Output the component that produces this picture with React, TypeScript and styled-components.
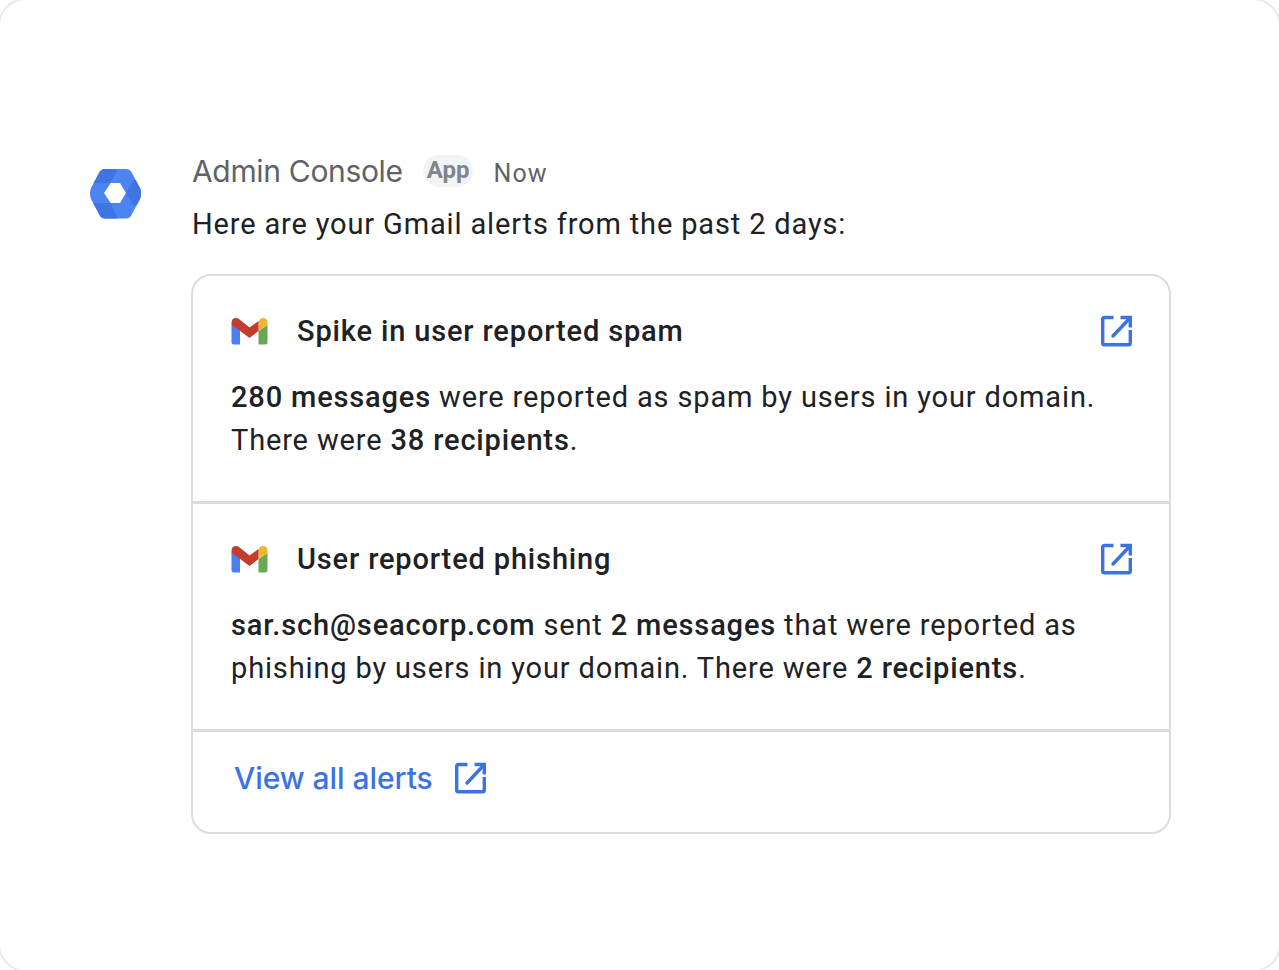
import React from 'react'
import styled, { createGlobalStyle } from 'styled-components'

const GlobalStyle = createGlobalStyle`
  html, body {
    margin: 0;
    padding: 0;
    background: #fff;
    overflow: hidden;
  }
  body {
    font-family: Roboto, "Liberation Sans", sans-serif;
    color: #202124;
  }
`

const Frame = styled.div`
  box-sizing: border-box;
  width: 1283px;
  height: 974px;
  margin: -2px;
  overflow: hidden;
  display: flex;
  gap: 50px;
  padding: 151px 108px 0 90px;
  border: 2px solid #e8e9ec;
  border-radius: 28px;
  background: #fff;
`

const Avatar = styled.div`
  flex: none;
  width: 52px;
  height: 52px;
  margin-top: 17px;
`

const Content = styled.div`
  flex: 1;
  min-width: 0;
`

const MetaRow = styled.div`
  display: flex;
  align-items: center;
  height: 40px;
`

const AppName = styled.span`
  font-family: Inter, Roboto, sans-serif;
  font-size: 30px;
  letter-spacing: -0.33px;
  color: #5f6368;
`

const AppTag = styled.span`
  margin-left: 20px;
  padding: 0 4px;
  height: 32px;
  line-height: 31px;
  border-radius: 16px;
  background: #f1f3f4;
  font-size: 24px;
  font-weight: 700;
  color: #80868b;
`

const Time = styled.span`
  margin-left: 20px;
  margin-top: 4px;
  font-size: 25px;
  letter-spacing: 1.1px;
  color: #5f6368;
`

const Intro = styled.p`
  margin: 12px 0 28px;
  font-size: 29px;
  line-height: 43px;
  letter-spacing: 0.85px;
`

const Card = styled.div`
  margin-left: -1px;
  border: 2px solid #dadce0;
  border-radius: 20px;
`

const Alert = styled.section`
  height: 225px;
  box-sizing: border-box;
  padding: 34px 36px 0 38px;
  & + & {
    height: 231px;
    padding-top: 34px;
    border-top: 3px solid #dadce0;
    border-bottom: 3px solid #dadce0;
  }
`

const AlertHead = styled.div`
  display: flex;
  align-items: center;
  height: 42px;
`

const Title = styled.h2`
  flex: 1;
  margin: 0 0 0 29px;
  font-size: 29px;
  font-weight: 500;
  letter-spacing: 0.85px;
`

const Body = styled.p`
  margin: 24px 0 0;
  font-size: 29px;
  line-height: 43px;
  letter-spacing: 0.85px;
  b {
    font-weight: 500;
  }
`

const Footer = styled.a`
  display: flex;
  align-items: center;
  gap: 22px;
  height: 100px;
  padding: 0 0 8px 41px;
  box-sizing: border-box;
  font-family: Inter, Roboto, sans-serif;
  font-size: 30px;
  font-weight: 500;
  letter-spacing: -0.05px;
  color: #3b73e2;
`

const GmailIcon = () => (
  <svg width="37" height="27" viewBox="0 0 36 27">
    <path d="M0 6 V24 Q0 26.500 2.500 26.500 H8.500 V12 Z" fill="#4a7fee" />
    <path d="M27 13 L36 7 V24 Q36 26.500 33.500 26.500 H27 Z" fill="#67a953" />
    <path d="M27 4 Q28 0 31.500 0 Q36 0 36 5 V7 L27 13 Z" fill="#edb62d" />
    <path d="M0 5 Q0 0 4.500 0 Q6 0 7.500 1 L18 9.500 L27 3 V13 L18 20 L0 6.500 Z" fill="#c43c2e" />
  </svg>
)

const OpenIcon = () => (
  <svg width="32" height="32" viewBox="0 0 32 32" fill="none" stroke="#3b73e2" strokeWidth="3.400">
    <path d="M12.500 2.500 H3.500 Q1.700 2.500 1.700 4.300 V28 Q1.700 29.800 3.500 29.800 H27.500 Q29.300 29.800 29.300 28 V15" />
    <path d="M19.500 2.500 H29.300 V12.500" />
    <path d="M29 3 L12 21" strokeLinecap="round" />
  </svg>
)

const AdminLogo = () => (
  <svg width="52" height="52" viewBox="0 0 52 52">
    <defs>
      <clipPath id="admin-logo-hex">
        <path d="M15 1 H36 Q40 1 42 5 L50 20 Q52 25.500 50 31 L42 46 Q40 50.500 36 50.500 H15 Q11 50.500 9 46 L1 31 Q-1 25.500 1 20 L9 5 Q11 1 15 1 Z" />
      </clipPath>
    </defs>
    <g clipPath="url(#admin-logo-hex)">
      <rect x="-1" width="53" height="52" fill="#4c84f4" />
      <path d="M-1 0 H28 L20.700 15 H-1 Z" fill="#3f74e3" />
      <path d="M44 12 L36 25 L43 37 H55 V12 Z" fill="#3f74e3" />
      <path d="M-1 35 H20.700 L28 52 H-1 Z" fill="#3f74e3" />
    </g>
    <path d="M14 25 L20.700 15 H30 L36 25 L30 35 H20.700 Z" fill="#fff" />
  </svg>
)

const App: React.FC = () => {
  return (
    <Frame>
      <GlobalStyle />
      <Avatar>
        <AdminLogo />
      </Avatar>
      <Content>
        <MetaRow>
          <AppName>Admin Console</AppName>
          <AppTag>App</AppTag>
          <Time>Now</Time>
        </MetaRow>
        <Intro>Here are your Gmail alerts from the past 2 days:</Intro>
        <Card>
          <Alert>
            <AlertHead>
              <GmailIcon />
              <Title>Spike in user reported spam</Title>
              <OpenIcon />
            </AlertHead>
            <Body>
              <b>280 messages</b> were reported as spam by users in your domain.
              <br />
              There were <b>38 recipients</b>.
            </Body>
          </Alert>
          <Alert>
            <AlertHead>
              <GmailIcon />
              <Title>User reported phishing</Title>
              <OpenIcon />
            </AlertHead>
            <Body>
              <b>sar.sch@seacorp.com</b> sent <b>2 messages</b> that were reported as
              <br />
              phishing by users in your domain. There were <b>2 recipients</b>.
            </Body>
          </Alert>
          <Footer>
            View all alerts
            <OpenIcon />
          </Footer>
        </Card>
      </Content>
    </Frame>
  )
}

export default App
